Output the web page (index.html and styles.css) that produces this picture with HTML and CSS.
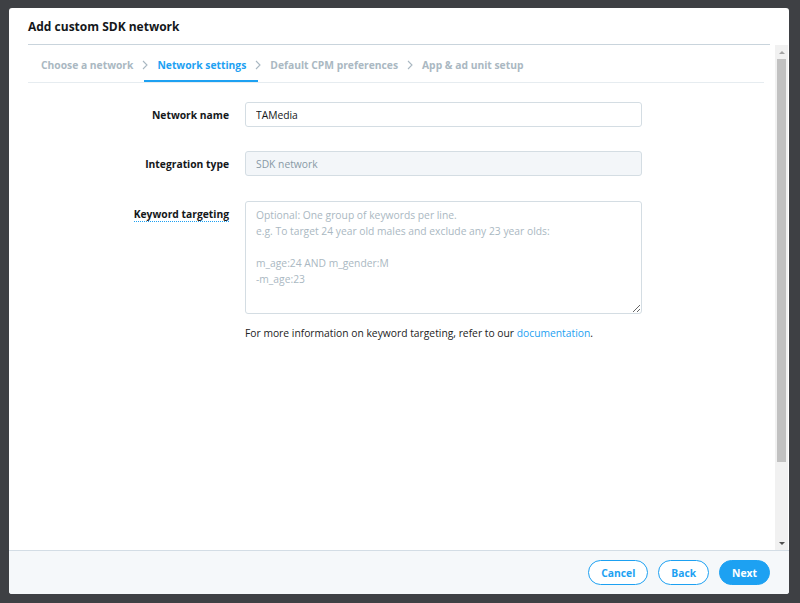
FILE: index.html
```html
<!DOCTYPE html>
<html lang="en">
<head>
<meta charset="utf-8">
<title>Add custom SDK network</title>
<link rel="stylesheet" href="styles.css">
</head>
<body>
<div class="backdrop">
  <div class="modal">
    <div class="modal-header">
      <h1 class="modal-title">Add custom SDK network</h1>
    </div>
    <div class="modal-body">
      <div class="scroll-content">
        <nav class="steps">
          <span class="step">Choose a network</span>
          <span class="chev"><svg width="6" height="10" viewBox="0 0 6 10"><path d="M1 1l4 4-4 4" fill="none" stroke="#aab8c2" stroke-width="1.1"/></svg></span>
          <span class="step step-active">Network settings</span>
          <span class="chev"><svg width="6" height="10" viewBox="0 0 6 10"><path d="M1 1l4 4-4 4" fill="none" stroke="#aab8c2" stroke-width="1.1"/></svg></span>
          <span class="step">Default CPM preferences</span>
          <span class="chev"><svg width="6" height="10" viewBox="0 0 6 10"><path d="M1 1l4 4-4 4" fill="none" stroke="#aab8c2" stroke-width="1.1"/></svg></span>
          <span class="step">App &amp; ad unit setup</span>
        </nav>
        <div class="form">
          <label class="label label-mid" for="name">Network name</label>
          <input class="field" id="name" type="text" value="TAMedia">
          <label class="label label-mid" for="type">Integration type</label>
          <input class="field field-disabled" id="type" type="text" value="SDK network" disabled>
          <label class="label label-top" for="kw"><span class="dotted">Keyword targeting</span></label>
          <textarea class="area" id="kw" placeholder="Optional: One group of keywords per line.
e.g. To target 24 year old males and exclude any 23 year olds:

m_age:24 AND m_gender:M
-m_age:23"></textarea>
          <p class="help">For more information on keyword targeting, refer to our <a class="link" href="#">documentation</a>.</p>
        </div>
      </div>
      <div class="scrollbar">
        <div class="sb-btn"><span class="tri-up"></span></div>
        <div class="sb-thumb"></div>
        <div class="sb-track"></div>
        <div class="sb-btn"><span class="tri-down"></span></div>
      </div>
    </div>
    <div class="modal-footer">
      <button class="btn btn-outline" type="button">Cancel</button>
      <button class="btn btn-outline" type="button">Back</button>
      <button class="btn btn-primary" type="button">Next</button>
    </div>
  </div>
</div>
</body>
</html>
```

FILE: styles.css
```css
* { box-sizing: border-box; }
html, body {
  margin: 0;
  padding: 0;
  width: 800px;
  height: 603px;
  overflow: hidden;
  background: #3e4044;
  font-family: "Open Sans", "Liberation Sans", sans-serif;
  font-size: 10.3px;
  color: #14171a;
}
.backdrop {
  padding: 8px 0 0 9px;
}
.modal {
  width: 780px;
  height: 586px;
  background: #ffffff;
  border-radius: 3px;
  display: flex;
  flex-direction: column;
  overflow: hidden;
}
.modal-header {
  margin: 0 19px;
  height: 37px;
  border-bottom: 1px solid #c9d4dc;
}
.modal-title {
  margin: 0;
  padding-top: 1px;
  font-size: 12px;
  font-weight: 700;
  line-height: 36px;
  color: #14171a;
}
.modal-body {
  flex: 1;
  display: flex;
  min-height: 0;
}
.scroll-content {
  flex: 1;
  padding: 0 11px 0 19px;
}
.steps {
  display: flex;
  align-items: stretch;
  height: 38px;
  border-bottom: 1px solid #e6ecf0;
}
.step {
  padding: 5px 12px 0 13px;
  line-height: 31px;
  font-weight: 700;
  color: #aab8c2;
  border-bottom: 2px solid transparent;
}
.step-active {
  color: #1da1f2;
  border-bottom-color: #1da1f2;
}
.chev {
  display: flex;
  align-items: center;
  padding-top: 3px;
  margin: 0 -4px 0 -3px;
}
.form {
  display: grid;
  grid-template-columns: 201px 397px;
  column-gap: 16px;
  row-gap: 24px;
  padding-top: 19px;
}
.label {
  text-align: right;
  font-weight: 700;
  line-height: 16px;
}
.label-mid { align-self: center; }
.label-top { align-self: start; padding-top: 5px; margin-top: 1px; }
.dotted {
  display: inline-block;
  line-height: 13px;
  border-bottom: 1px dotted #1da1f2;
}
.field {
  height: 25px;
  border: 1px solid #d4dde3;
  border-radius: 3px;
  padding: 0 10px;
  font-family: inherit;
  font-size: 10.3px;
  color: #14171a;
  background: #fff;
  outline: none;
}
.field-disabled {
  background: #f3f6f9;
  color: #8899a6;
}
.area {
  height: 113px;
  margin-top: 1px;
  border: 1px solid #d4dde3;
  border-radius: 3px;
  padding: 5px 10px;
  font-family: inherit;
  font-size: 10.3px;
  line-height: 16px;
  resize: vertical;
  outline: none;
}
.area::placeholder { color: #aab8c2; }
.help {
  grid-column: 2;
  margin: -13px 0 0;
  line-height: 16px;
  color: #222;
}
.link { color: #1da1f2; text-decoration: none; }
.scrollbar {
  width: 13px;
  background: #f1f1f1;
  display: flex;
  flex-direction: column;
  margin-right: 1px;
}
.sb-btn {
  height: 14px;
  display: flex;
  align-items: center;
  justify-content: center;
}
.tri-up {
  width: 0; height: 0;
  border-left: 3px solid transparent;
  border-right: 3px solid transparent;
  border-bottom: 3px solid #a3a3a3;
}
.tri-down {
  width: 0; height: 0;
  border-left: 3px solid transparent;
  border-right: 3px solid transparent;
  border-top: 3px solid #505050;
}
.sb-thumb {
  height: 403px;
  margin: 0 2px;
  background: #c1c1c1;
}
.sb-track { flex: 1; }
.modal-footer {
  height: 44px;
  border-top: 1px solid #d3dde5;
  background: #f5f8fa;
  display: flex;
  justify-content: flex-end;
  align-items: center;
  gap: 10px;
  padding: 0 19px;
}
.btn {
  height: 25px;
  border-radius: 13px;
  border: 1px solid #1da1f2;
  font-family: inherit;
  font-size: 10.3px;
  font-weight: 700;
  padding: 0 12px;
  cursor: pointer;
}
.btn-outline { background: #fff; color: #1da1f2; }
.btn-primary { background: #1da1f2; color: #fff; }
```
